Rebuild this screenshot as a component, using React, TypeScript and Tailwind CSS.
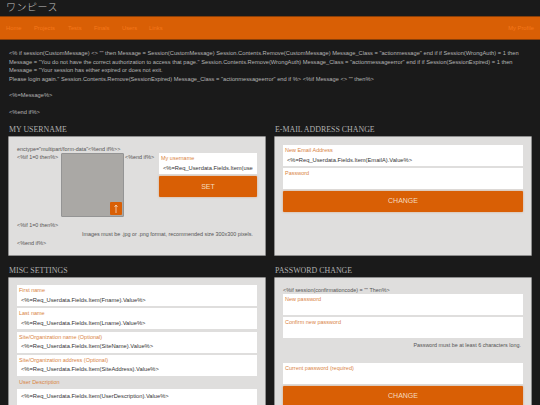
const serif = "font-['Liberation_Serif',serif]";

function Field({ label, value }: { label: string; value?: string }) {
  return (
    <div className="bg-white h-[21px] overflow-hidden px-[2px] pt-[1px] shrink-0">
      <div className="text-[5.5px] leading-[8px] text-[#d9843f] whitespace-nowrap">{label}</div>
      {value && <div className="text-[5.75px] leading-[8px] mt-[1.5px] pl-[2px] text-[#333] whitespace-nowrap">{value}</div>}
    </div>
  );
}

function Btn({ children }: { children: string }) {
  return (
    <div className="h-[21px] shrink-0 bg-[#d95f05] rounded-[1px] shadow-[0_0_2px_rgba(217,95,5,0.5)] flex items-center justify-center text-[7px] text-[#f5d9bf]">
      {children}
    </div>
  );
}

function Section({ title, children, panel }: { title: string; children: React.ReactNode; panel: string }) {
  return (
    <section>
      <h2 className={`${serif} text-[7.9px] leading-[10px] text-[#b0b0b0] h-[12px] pt-[1px] pl-[1px]`}>{title}</h2>
      <div className={`bg-[#dfdedd] border border-[#8e8e8e] rounded-[1px] ${panel}`}>{children}</div>
    </section>
  );
}

export default function App() {
  return (
    <div className="w-[540px] h-[405px] overflow-hidden bg-[#1a1a1a] font-['Liberation_Sans',sans-serif]">
      <header className="h-[16px] pl-[6px] text-[10px] leading-[13px] text-[#c0c0c0] font-['Noto_Sans_CJK_JP',sans-serif] font-light tracking-[0.5px]">
        ワンピース
      </header>
      <nav className="h-[24px] bg-[#d95f05] border-y border-[#8a3f08] flex items-center pl-[6px] pr-[6px] text-[5.8px] text-[#f5781c]">
        <span className="w-[28px]">Home</span>
        <span className="w-[34px]">Projects</span>
        <span className="w-[26px]">Tests</span>
        <span className="w-[28px]">Finals</span>
        <span className="w-[27px]">Users</span>
        <span>Links</span>
        <span className="ml-auto">My Profile</span>
      </nav>
      <div className="pl-[9px] pr-[10px] pt-[9px] text-[5.72px] leading-[8.5px] text-[#b4b4b4]">
        <p>
          &lt;% if session(CustomMessage) &lt;&gt; "" then Message = Session(CustomMessage) Session.Contents.Remove(CustomMessage) Message_Class = "actionmessage" end if if Session(WrongAuth) = 1 then Message = "You do not have the correct authorization to access that page." Session.Contents.Remove(WrongAuth) Message_Class = "actionmessageerror" end if if Session(SessionExpired) = 1 then Message = "Your session has either expired or does not exit.
          <br />
          Please login again." Session.Contents.Remove(SessionExpired) Message_Class = "actionmessageerror" end if %&gt; &lt;%if Message &lt;&gt; "" then%&gt;
        </p>
        <p className="mt-[8px]">&lt;%=Message%&gt;</p>
        <p className="mt-[8px]">&lt;%end if%&gt;</p>
      </div>
      <main className="mt-[8px] px-[8px] grid grid-cols-2 gap-x-[8px] gap-y-[9px]">
        <Section title="MY USERNAME" panel="h-[120px] px-[8px] pt-[8px] text-[5.4px] leading-[8px] text-[#555]">
          <div>enctype="multipart/form-data"&lt;%end if%&gt;&gt;</div>
          <div className="flex items-start">
            <span className="w-[44px] whitespace-nowrap">&lt;%if 1=0 then%&gt;</span>
            <div className="relative w-[63px] h-[64px] bg-[#aaa8a5] border border-[#949494] rounded-[1px]">
              <div className="absolute right-[1px] bottom-[1px] w-[12px] h-[13px] bg-[#d95f05] rounded-[1px] flex items-center justify-center">
                <svg width="4" height="9" viewBox="0 0 4 9" fill="none" stroke="#f5dcc5" strokeWidth="0.8"><path d="M2 9V1M0.5 3L2 1L3.5 3" /></svg>
              </div>
            </div>
            <span className="w-[35px] pl-[1px] whitespace-nowrap">&lt;%end if%&gt;</span>
            <div className="w-[98px] flex flex-col gap-[2px]">
              <Field label="My username" value="<%=Req_Userdata.Fields.Item(use" />
              <Btn>SET</Btn>
            </div>
          </div>
          <div className="mt-[4px]">&lt;%if 1=0 then%&gt;</div>
          <div className="mt-[1px] pr-[4px] text-right">Images must be .jpg or .png format, recommended size 300x300 pixels.</div>
          <div className="mt-[1px]">&lt;%end if%&gt;</div>
        </Section>
        <Section title="E-MAIL ADDRESS CHANGE" panel="h-[120px] px-[8px] pt-[8px] flex flex-col gap-[2px]">
          <Field label="New Email Address" value="<%=Req_Userdata.Fields.Item(EmailA).Value%>" />
          <Field label="Password" />
          <Btn>CHANGE</Btn>
        </Section>
        <Section title="MISC SETTINGS" panel="h-[140px] px-[8px] pt-[7px] flex flex-col gap-[2.3px]">
          <Field label="First name" value="<%=Req_Userdata.Fields.Item(Fname).Value%>" />
          <Field label="Last name" value="<%=Req_Userdata.Fields.Item(Lname).Value%>" />
          <Field label="Site/Organization name (Optional)" value="<%=Req_Userdata.Fields.Item(SiteName).Value%>" />
          <Field label="Site/Organization address (Optional)" value="<%=Req_Userdata.Fields.Item(SiteAddress).Value%>" />
          <div className="text-[5.5px] leading-[8px] text-[#d9843f] pl-[2px] h-[9px] shrink-0">User Description</div>
          <div className="bg-white h-[30px] shrink-0 pl-[4px] pt-[3px] text-[5.75px] leading-[8px] text-[#333]">&lt;%=Req_Userdata.Fields.Item(UserDescription).Value%&gt;</div>
        </Section>
        <Section title="PASSWORD CHANGE" panel="h-[140px] px-[8px] pt-[8px] flex flex-col">
          <div className="text-[5.4px] leading-[8px] text-[#555] h-[8px] shrink-0">&lt;%if session(confirmationcode) = "" Then%&gt;</div>
          <Field label="New password" />
          <div className="h-[2px] shrink-0" />
          <Field label="Confirm new password" />
          <div className="text-[5.4px] leading-[8px] text-[#555] text-right pr-[2px] pt-[3px] h-[25px] shrink-0">Password must be at least 6 characters long.</div>
          <Field label="Current password (required)" />
          <div className="h-[2px] shrink-0" />
          <Btn>CHANGE</Btn>
        </Section>
      </main>
    </div>
  );
}
